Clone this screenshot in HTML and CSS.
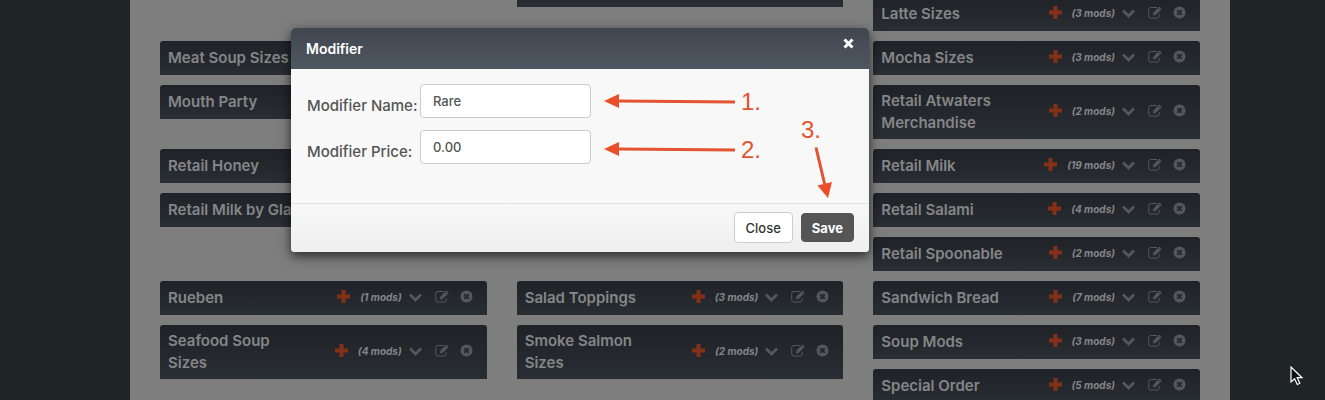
FILE: index.html
```html
<!DOCTYPE html>
<html lang="en">
<head>
<meta charset="utf-8">
<title>Modifiers</title>
<link rel="stylesheet" href="styles.css">
</head>
<body>
<svg class="defs" aria-hidden="true">
  <symbol id="plus" viewBox="0 0 13 13"><path d="M4.500 0h4v4.500H13v4H8.500V13h-4V8.500H0v-4h4.500z"/></symbol>
  <symbol id="down" viewBox="0 0 13 13"><path d="M0 5.500 2 3.500l4.500 4.500L11 3.500l2 2L6.500 12z"/></symbol>
  <symbol id="edit" viewBox="0 0 14 13"><path d="M9 1.500H3A2.300 2.300 0 0 0 .7 3.800v6A2.300 2.300 0 0 0 3 12.100h6a2.300 2.300 0 0 0 2.300-2.300V8" fill="none" stroke="currentColor"/><path d="M5 9.300V6.900L11.300.6 13.700 3 7.400 9.300z"/><path d="M10.200 2 12.300 4.100M6 6.900 7.500 8.400" fill="none" stroke="#25292f" stroke-width=".7"/></symbol>
  <symbol id="remove" viewBox="0 0 13 13"><circle cx="6.500" cy="6.500" r="6"/><path d="m4.300 4.300 4.400 4.400m0-4.400-4.400 4.400" stroke="#25292f" stroke-width="2"/></symbol>
</svg>
<main class="page">
  <div class="columns">
    <section class="column column--left">
      <article class="card"><h2 class="card-title">Meat Soup Sizes</h2></article>
      <article class="card"><h2 class="card-title">Mouth Party</h2></article>
      <article class="card card--group"><h2 class="card-title">Retail Honey</h2></article>
      <article class="card"><h2 class="card-title card-title--line">Retail Milk by Glass</h2></article>
      <article class="card card--section"><h2 class="card-title">Rueben</h2><div class="tools"><button class="tool tool--add" aria-label="Add"><svg><use href="#plus"/></svg></button><em class="count">(1 mods)</em><button class="tool" aria-label="Expand"><svg><use href="#down"/></svg></button><button class="tool tool--edit" aria-label="Edit"><svg><use href="#edit"/></svg></button><button class="tool" aria-label="Remove"><svg><use href="#remove"/></svg></button></div></article>
      <article class="card"><h2 class="card-title">Seafood Soup Sizes</h2><div class="tools"><button class="tool tool--add" aria-label="Add"><svg><use href="#plus"/></svg></button><em class="count">(4 mods)</em><button class="tool" aria-label="Expand"><svg><use href="#down"/></svg></button><button class="tool tool--edit" aria-label="Edit"><svg><use href="#edit"/></svg></button><button class="tool" aria-label="Remove"><svg><use href="#remove"/></svg></button></div></article>
    </section>
    <section class="column column--middle">
      <article class="card"></article>
      <article class="card card--far"><h2 class="card-title">Salad Toppings</h2><div class="tools"><button class="tool tool--add" aria-label="Add"><svg><use href="#plus"/></svg></button><em class="count">(3 mods)</em><button class="tool" aria-label="Expand"><svg><use href="#down"/></svg></button><button class="tool tool--edit" aria-label="Edit"><svg><use href="#edit"/></svg></button><button class="tool" aria-label="Remove"><svg><use href="#remove"/></svg></button></div></article>
      <article class="card"><h2 class="card-title">Smoke Salmon Sizes</h2><div class="tools"><button class="tool tool--add" aria-label="Add"><svg><use href="#plus"/></svg></button><em class="count">(2 mods)</em><button class="tool" aria-label="Expand"><svg><use href="#down"/></svg></button><button class="tool tool--edit" aria-label="Edit"><svg><use href="#edit"/></svg></button><button class="tool" aria-label="Remove"><svg><use href="#remove"/></svg></button></div></article>
    </section>
    <section class="column column--right">
      <article class="card"><h2 class="card-title">Latte Sizes</h2><div class="tools"><button class="tool tool--add" aria-label="Add"><svg><use href="#plus"/></svg></button><em class="count">(3 mods)</em><button class="tool" aria-label="Expand"><svg><use href="#down"/></svg></button><button class="tool tool--edit" aria-label="Edit"><svg><use href="#edit"/></svg></button><button class="tool" aria-label="Remove"><svg><use href="#remove"/></svg></button></div></article>
      <article class="card"><h2 class="card-title">Mocha Sizes</h2><div class="tools"><button class="tool tool--add" aria-label="Add"><svg><use href="#plus"/></svg></button><em class="count">(3 mods)</em><button class="tool" aria-label="Expand"><svg><use href="#down"/></svg></button><button class="tool tool--edit" aria-label="Edit"><svg><use href="#edit"/></svg></button><button class="tool" aria-label="Remove"><svg><use href="#remove"/></svg></button></div></article>
      <article class="card"><h2 class="card-title">Retail Atwaters Merchandise</h2><div class="tools"><button class="tool tool--add" aria-label="Add"><svg><use href="#plus"/></svg></button><em class="count">(2 mods)</em><button class="tool" aria-label="Expand"><svg><use href="#down"/></svg></button><button class="tool tool--edit" aria-label="Edit"><svg><use href="#edit"/></svg></button><button class="tool" aria-label="Remove"><svg><use href="#remove"/></svg></button></div></article>
      <article class="card"><h2 class="card-title">Retail Milk</h2><div class="tools"><button class="tool tool--add" aria-label="Add"><svg><use href="#plus"/></svg></button><em class="count">(19 mods)</em><button class="tool" aria-label="Expand"><svg><use href="#down"/></svg></button><button class="tool tool--edit" aria-label="Edit"><svg><use href="#edit"/></svg></button><button class="tool" aria-label="Remove"><svg><use href="#remove"/></svg></button></div></article>
      <article class="card"><h2 class="card-title">Retail Salami</h2><div class="tools"><button class="tool tool--add" aria-label="Add"><svg><use href="#plus"/></svg></button><em class="count">(4 mods)</em><button class="tool" aria-label="Expand"><svg><use href="#down"/></svg></button><button class="tool tool--edit" aria-label="Edit"><svg><use href="#edit"/></svg></button><button class="tool" aria-label="Remove"><svg><use href="#remove"/></svg></button></div></article>
      <article class="card"><h2 class="card-title">Retail Spoonable</h2><div class="tools"><button class="tool tool--add" aria-label="Add"><svg><use href="#plus"/></svg></button><em class="count">(2 mods)</em><button class="tool" aria-label="Expand"><svg><use href="#down"/></svg></button><button class="tool tool--edit" aria-label="Edit"><svg><use href="#edit"/></svg></button><button class="tool" aria-label="Remove"><svg><use href="#remove"/></svg></button></div></article>
      <article class="card"><h2 class="card-title">Sandwich Bread</h2><div class="tools"><button class="tool tool--add" aria-label="Add"><svg><use href="#plus"/></svg></button><em class="count">(7 mods)</em><button class="tool" aria-label="Expand"><svg><use href="#down"/></svg></button><button class="tool tool--edit" aria-label="Edit"><svg><use href="#edit"/></svg></button><button class="tool" aria-label="Remove"><svg><use href="#remove"/></svg></button></div></article>
      <article class="card"><h2 class="card-title">Soup Mods</h2><div class="tools"><button class="tool tool--add" aria-label="Add"><svg><use href="#plus"/></svg></button><em class="count">(3 mods)</em><button class="tool" aria-label="Expand"><svg><use href="#down"/></svg></button><button class="tool tool--edit" aria-label="Edit"><svg><use href="#edit"/></svg></button><button class="tool" aria-label="Remove"><svg><use href="#remove"/></svg></button></div></article>
      <article class="card"><h2 class="card-title">Special Order</h2><div class="tools"><button class="tool tool--add" aria-label="Add"><svg><use href="#plus"/></svg></button><em class="count">(5 mods)</em><button class="tool" aria-label="Expand"><svg><use href="#down"/></svg></button><button class="tool tool--edit" aria-label="Edit"><svg><use href="#edit"/></svg></button><button class="tool" aria-label="Remove"><svg><use href="#remove"/></svg></button></div></article>
    </section>
  </div>
</main>

<form class="modal" role="dialog" aria-labelledby="modal-title">
  <header class="modal-header">
    <h1 class="modal-title" id="modal-title">Modifier</h1>
    <button class="dismiss" type="button" aria-label="Dismiss"><svg viewBox="0 0 11 11"><path d="m1.500 1.500 8 8m0-8-8 8" stroke="#fff" stroke-width="3"/></svg></button>
  </header>
  <div class="modal-body">
    <div class="field"><label for="name">Modifier Name:</label><input id="name" type="text" value="Rare"></div>
    <div class="field"><label for="price">Modifier Price:</label><input id="price" type="text" value="0.00"></div>
  </div>
  <footer class="modal-footer">
    <button class="button" type="button">Close</button>
    <button class="button button--primary" type="submit">Save</button>
  </footer>
  <svg class="notes" viewBox="0 0 270 120">
    <g fill="#ee4d29">
      <path d="M3 21 18 14v14zM3 69 18 62v14zM227 118 216.500 105.500l14.500-3.500z"/>
      <path d="M17 21 134 22M17 69l117 1M215 67.500l9 38" stroke="#e3532f" stroke-width="3"/>
    </g>
    <g class="note-text">
      <text x="140" y="30">1.</text>
      <text x="140" y="78">2.</text>
      <text x="200" y="58">3.</text>
    </g>
  </svg>
</form>

<svg class="cursor" viewBox="0 0 13 20" aria-hidden="true"><path d="M1 1v15l3.600-3.300L7.300 18.500l2.500-1.200-2.600-5.600H12z" fill="#111" stroke="#fff" stroke-width="1.200"/></svg>
</body>
</html>
```
FILE: styles.css
```css
* { box-sizing: border-box; }

body {
  margin: 0;
  height: 100vh;
  overflow: hidden;
  background: #1f2427;
  font-family: Inter, "Liberation Sans", sans-serif;
}

button { font: inherit; padding: 0; cursor: pointer; }

.defs { display: none; }

.page {
  height: 100vh;
  margin: 0 95px 0 130px;
  padding: 0 30px;
  overflow: hidden;
  background: #7e7e7e;
}

.columns {
  display: grid;
  grid-template-columns: repeat(3, 1fr);
  gap: 30px;
}

.column { display: flex; flex-direction: column; gap: 10px; }
.column--left { margin-top: 41px; }
.column--middle { margin-top: -27px; }
.column--right { margin-top: -3px; }

.card {
  display: flex;
  align-items: center;
  justify-content: space-between;
  flex: none;
  min-height: 34px;
  padding: 5px 14px 5px 8px;
  border-radius: 3px 3px 0 0;
  background: linear-gradient(#1f2227, #292e34);
}
.card--group { margin-top: 20px; }
.card--section { margin-top: 44px; }
.card--far { margin-top: 264px; }

.card-title {
  margin: 0;
  max-width: 136px;
  color: #858687;
  font-size: 15px;
  font-weight: 600;
  line-height: 22px;
}
.card-title--line { max-width: none; }

.tools { display: flex; align-items: flex-start; padding-bottom: 1px; }

.tool {
  width: 13px;
  height: 13px;
  border: 0;
  background: none;
  color: #55575a;
}
.tool svg { display: block; width: 100%; height: 100%; fill: currentColor; }
.tool--add { margin-right: 10px; color: #843017; }
.tool--edit { width: 14px; margin: 0 11px 0 13px; }

.count {
  margin-right: 7px;
  color: #858687;
  font-size: 10px;
  font-weight: 700;
  line-height: 15px;
}

.modal {
  position: absolute;
  top: 28px;
  left: 291px;
  width: 578px;
  border-radius: 4px;
  background: #f8f8f8;
  box-shadow: 0 4px 12px rgba(0, 0, 0, .7);
}

.modal-header {
  display: flex;
  justify-content: space-between;
  align-items: flex-start;
  padding: 10px 15px;
  border-radius: 4px 4px 0 0;
  background: linear-gradient(#41464f, #4e5761);
}
.modal-title {
  margin: 0;
  color: #fff;
  font-size: 14px;
  font-weight: 600;
  line-height: 21px;
}
.dismiss { width: 11px; height: 11px; border: 0; background: none; }
.dismiss svg { display: block; }

.modal-body {
  display: flex;
  flex-direction: column;
  gap: 12px;
  padding: 15px 16px 39px;
}
.field { display: flex; align-items: center; }
.field label {
  width: 113px;
  padding-top: 10px;
  color: #555;
  font-size: 15px;
  font-weight: 500;
  line-height: 20px;
  white-space: nowrap;
}
.field input {
  width: 171px;
  height: 34px;
  padding: 0 12px;
  border: 1px solid #ccc;
  border-radius: 4px;
  background: #fff;
  color: #555;
  font: 500 13px Inter, sans-serif;
}

.modal-footer {
  display: flex;
  justify-content: flex-end;
  align-items: center;
  gap: 8px;
  padding: 8px 15px 9px;
  border-top: 1px solid #e2e2e2;
  border-radius: 0 0 4px 4px;
  background: linear-gradient(#f8f8f8, #efefef);
}
.button {
  height: 31px;
  padding: 0 11px;
  border: 1px solid #ccc;
  border-radius: 4px;
  background: #fff;
  color: #333;
  font-size: 13px;
  font-weight: 500;
}
.button--primary {
  height: 29px;
  padding: 0 10px;
  border-color: #555;
  background: #555;
  color: #fff;
  font-weight: 700;
}

.notes {
  position: absolute;
  top: 52px;
  left: 310px;
  width: 270px;
  height: 120px;
  pointer-events: none;
}
.note-text {
  fill: #e3532f;
  font-family: "Liberation Sans", Arial, sans-serif;
  font-size: 24px;
}

.cursor {
  position: absolute;
  top: 366px;
  left: 1290px;
  width: 13px;
  height: 20px;
}
```
